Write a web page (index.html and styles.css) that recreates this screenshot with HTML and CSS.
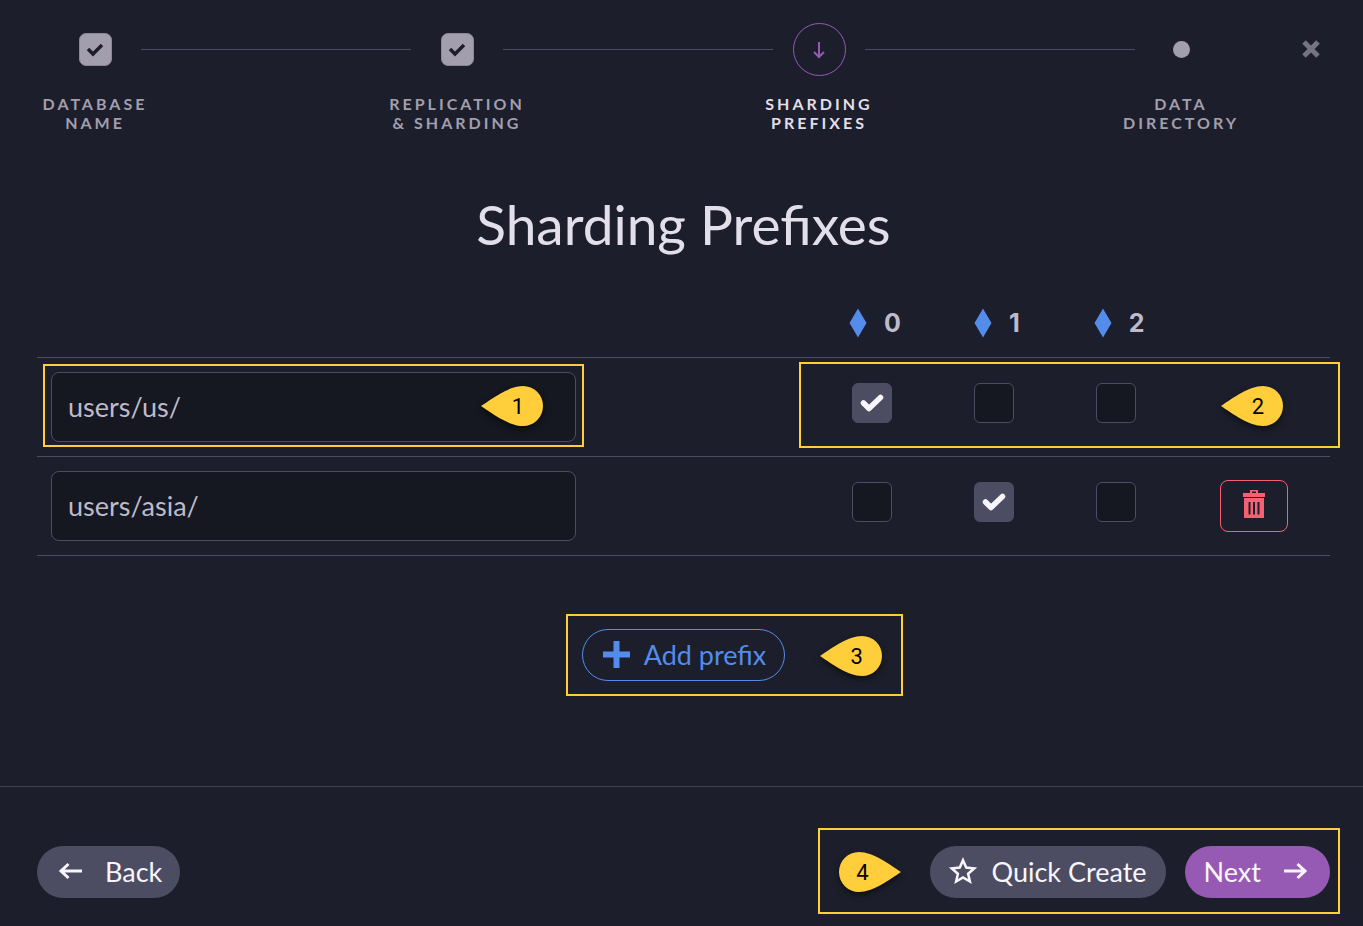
FILE: index.html
```html
<!DOCTYPE html>
<html lang="en">
<head>
<meta charset="utf-8">
<meta name="viewport" content="width=device-width, initial-scale=1">
<title>Sharding Prefixes</title>
<link rel="stylesheet" href="styles.css">
</head>
<body>
<svg class="sprite" aria-hidden="true">
  <symbol id="check" viewBox="0 0 24 18"><path d="M3.5 9 L9 14.5 L20.5 3.5" fill="none" stroke="currentColor" stroke-width="5.5" stroke-linecap="round" stroke-linejoin="round"/></symbol>
  <symbol id="check-sharp" viewBox="0 0 18 14"><path d="M2 6 L7 11 L16 2" fill="none" stroke="currentColor" stroke-width="3.5"/></symbol>
  <symbol id="arrow" viewBox="0 0 24 18"><path d="M0 9 H21 M13.5 2 L21 9 L13.5 16" fill="none" stroke="currentColor" stroke-width="3"/></symbol>
  <symbol id="diamond" viewBox="0 0 18 30"><path d="M9 0.5 L17.5 15 L9 29.5 L0.5 15Z" fill="currentColor"/></symbol>
  <symbol id="pin" viewBox="0 0 62 40"><path d="M0 20 C12 12 28 0 42 0 A20 20 0 0 1 42 40 C28 40 12 28 0 20Z" fill="currentColor"/></symbol>
</svg>

<header class="top">
  <ol class="steps">
    <li class="step">
      <span class="step-icon"><span class="step-done"><svg width="18" height="14"><use href="#check-sharp"/></svg></span></span>
      <span class="step-label">Database<br>name</span>
    </li>
    <li class="step-line"></li>
    <li class="step">
      <span class="step-icon"><span class="step-done"><svg width="18" height="14"><use href="#check-sharp"/></svg></span></span>
      <span class="step-label">Replication<br>&amp; sharding</span>
    </li>
    <li class="step-line"></li>
    <li class="step step-active" aria-current="step">
      <span class="step-icon"><span class="step-current"><svg width="14" height="18" viewBox="0 0 14 18"><path d="M7 1 V16 M2 11 L7 16 L12 11" fill="none" stroke="currentColor" stroke-width="2"/></svg></span></span>
      <span class="step-label">Sharding<br>prefixes</span>
    </li>
    <li class="step-line"></li>
    <li class="step">
      <span class="step-icon"><span class="step-dot"></span></span>
      <span class="step-label">Data<br>directory</span>
    </li>
  </ol>
  <button class="close" type="button" aria-label="Close"><svg width="20" height="20" viewBox="0 0 20 20"><path d="M3 3 L17 17 M17 3 L3 17" stroke="currentColor" stroke-width="5"/></svg></button>
</header>

<main class="content">
  <h1 class="title">Sharding Prefixes</h1>
  <table class="prefixes">
    <thead>
      <tr>
        <th class="col-prefix"></th>
        <th class="col-shard"><span class="shard"><svg width="18" height="30"><use href="#diamond"/></svg>0</span></th>
        <th class="col-shard"><span class="shard"><svg width="18" height="30"><use href="#diamond"/></svg>1</span></th>
        <th class="col-shard"><span class="shard"><svg width="18" height="30"><use href="#diamond"/></svg>2</span></th>
        <th class="col-action"></th>
      </tr>
    </thead>
    <tbody>
      <tr class="row-marked">
        <td>
          <div class="field">
            <input class="text" type="text" value="users/us/" aria-label="Prefix 1">
            <div class="callout callout-field"><span class="pin"><svg><use href="#pin"/></svg><b>1</b></span></div>
          </div>
        </td>
        <td class="cell-check"><label class="tick"><input type="checkbox" checked aria-label="users/us/ on shard 0"><svg width="24" height="18"><use href="#check"/></svg></label></td>
        <td class="cell-check"><label class="tick"><input type="checkbox" aria-label="users/us/ on shard 1"><svg width="24" height="18"><use href="#check"/></svg></label></td>
        <td class="cell-check"><label class="tick"><input type="checkbox" aria-label="users/us/ on shard 2"><svg width="24" height="18"><use href="#check"/></svg></label></td>
        <td><div class="callout callout-shards"><span class="pin"><svg><use href="#pin"/></svg><b>2</b></span></div></td>
      </tr>
      <tr>
        <td>
          <div class="field"><input class="text" type="text" value="users/asia/" aria-label="Prefix 2"></div>
        </td>
        <td class="cell-check"><label class="tick"><input type="checkbox" aria-label="users/asia/ on shard 0"><svg width="24" height="18"><use href="#check"/></svg></label></td>
        <td class="cell-check"><label class="tick"><input type="checkbox" checked aria-label="users/asia/ on shard 1"><svg width="24" height="18"><use href="#check"/></svg></label></td>
        <td class="cell-check"><label class="tick"><input type="checkbox" aria-label="users/asia/ on shard 2"><svg width="24" height="18"><use href="#check"/></svg></label></td>
        <td class="cell-action">
          <button class="delete" type="button" aria-label="Delete prefix"><svg width="22" height="28" viewBox="0 0 22 28"><path fill="currentColor" fill-rule="evenodd" d="M7 0H15V3H22V7H0V3H7ZM9 1.500V3H13V1.500ZM1 8H21V28H1ZM5.500 12V24.500H7.500V12ZM10 12V24.500H12V12ZM14.500 12V24.500H16.500V12Z"/></svg></button>
        </td>
      </tr>
    </tbody>
  </table>
  <div class="add">
    <button class="btn btn-outline" type="button"><svg width="27" height="27" viewBox="0 0 27 27"><path d="M13.500 0V27M0 13.500H27" stroke="currentColor" stroke-width="6"/></svg>Add prefix</button>
    <div class="callout callout-add"><span class="pin"><svg><use href="#pin"/></svg><b>3</b></span></div>
  </div>
</main>

<footer class="bottom">
  <button class="btn btn-back" type="button"><svg class="flip" width="24" height="18"><use href="#arrow"/></svg>Back</button>
  <div class="actions">
    <div class="callout callout-actions"><span class="pin pin-right"><svg class="flip"><use href="#pin"/></svg><b>4</b></span></div>
    <button class="btn btn-quick" type="button"><svg width="28" height="28" viewBox="0 0 28 28"><path d="M14 3.200 L17.200 10.600 L25.200 11.400 L19.100 16.700 L20.900 24.500 L14 20.400 L7.100 24.500 L8.900 16.700 L2.800 11.400 L10.800 10.600Z" fill="none" stroke="currentColor" stroke-width="2.500"/></svg>Quick Create</button>
    <button class="btn btn-next" type="button">Next<svg width="24" height="18"><use href="#arrow"/></svg></button>
  </div>
</footer>
</body>
</html>
```
FILE: styles.css
```css
* { box-sizing: border-box; }

body {
  margin: 0;
  min-height: 100vh;
  display: flex;
  flex-direction: column;
  background: #1c1e2b;
  color: #bfbaca;
  font-family: Lato, "Open Sans", sans-serif;
  font-size: 27px;
}

button, input { font: inherit; margin: 0; }
button { cursor: pointer; }
svg { display: block; flex: none; overflow: visible; }
.sprite { position: absolute; width: 0; height: 0; }
.flip { transform: scaleX(-1); }

/* Stepper */
.top {
  display: flex;
  align-items: flex-start;
  padding: 23px 37px 0 49px;
}
.steps {
  flex: 1;
  display: flex;
  margin: 0;
  padding: 0;
  list-style: none;
}
.step {
  width: 92px;
  display: flex;
  flex-direction: column;
  align-items: center;
  gap: 18px;
  color: #a29eae;
}
.step-line {
  flex: 1;
  height: 1px;
  margin-top: 26px;
  background: #4c4d62;
}
.step-icon {
  height: 53px;
  display: grid;
  place-items: center;
}
.step-done {
  width: 33px;
  height: 33px;
  display: grid;
  place-items: center;
  border: 1px solid #8b8799;
  border-radius: 7px;
  background: #a29eae;
  color: #1c1e2b;
}
.step-current {
  width: 53px;
  height: 53px;
  display: grid;
  place-items: center;
  border: 1px solid #965ab5;
  border-radius: 50%;
  color: #965ab5;
}
.step-dot {
  width: 17px;
  height: 17px;
  border-radius: 50%;
  background: #a29eae;
}
.step-label {
  font-size: 16px;
  font-weight: 700;
  line-height: 19px;
  letter-spacing: 3px;
  text-align: center;
  text-transform: uppercase;
  white-space: nowrap;
}
.step-active { color: #e2dfea; }
.close {
  height: 52px;
  margin-left: 69px;
  padding: 0 5px;
  border: 0;
  background: none;
  color: #777482;
}

/* Content */
.content {
  flex: 1;
  display: flex;
  flex-direction: column;
  padding: 0 33px 0 37px;
}
.title {
  margin: 60px 0 33px;
  color: #e2dfea;
  font-size: 55px;
  font-weight: 400;
  line-height: 64px;
  text-align: center;
}
.prefixes {
  width: 100%;
  border-spacing: 0;
  table-layout: fixed;
}
.prefixes th, .prefixes td {
  padding: 0;
  border-bottom: 1px solid #4c4d62;
}
.prefixes th { height: 69px; }
.prefixes td { height: 99px; }
.col-shard { width: 122px; }
.col-action { width: 153px; }
.shard {
  display: flex;
  justify-content: center;
  align-items: center;
  gap: 17px;
  padding-left: 6px;
  font-family: Inter, sans-serif;
  font-size: 25px;
  font-weight: 700;
}
.shard svg { color: #538cea; }

.row-marked { position: relative; }
.field {
  position: relative;
  width: 525px;
  margin: 0 14px;
}
.text {
  display: block;
  width: 100%;
  height: 70px;
  padding: 0 16px 2px;
  border: 1px solid #4c4d62;
  border-radius: 8px;
  background: #151721;
  color: #bfbaca;
}
.prefixes .cell-check { padding-bottom: 8px; }
.tick {
  position: relative;
  display: block;
  width: 40px;
  height: 40px;
  margin: 0 auto;
}
.tick input {
  appearance: none;
  display: block;
  width: 40px;
  height: 40px;
  border: 1px solid #4c4d62;
  border-radius: 6px;
  background: #151721;
}
.tick svg {
  position: absolute;
  inset: 0;
  margin: auto;
  color: #f8f5fc;
  visibility: hidden;
  pointer-events: none;
}
.tick input:checked { background: #4c4d62; }
.tick input:checked + svg { visibility: visible; }
.delete {
  width: 68px;
  height: 52px;
  display: grid;
  place-items: center;
  margin: 0 auto;
  padding: 0 0 4px;
  border: 1px solid #f75f72;
  border-radius: 8px;
  background: none;
  color: #f75f72;
}

/* Buttons */
.btn {
  height: 52px;
  display: flex;
  align-items: center;
  gap: 23px;
  padding: 0 18px 2px;
  border: 1px solid transparent;
  border-radius: 26px;
  background: #4c4d62;
  color: #f8f5fc;
}
.btn-outline {
  gap: 14px;
  padding: 0 18px 2px 20px;
  border-color: #538cea;
  background: none;
  color: #538cea;
}
.btn-back { padding: 0 17px 2px 20px; }
.btn-quick { gap: 15px; }
.btn-next { padding-right: 21px; background: #965ab5; }
.add {
  position: relative;
  align-self: center;
  margin: 73px 0;
}

/* Footer */
.bottom {
  display: flex;
  justify-content: space-between;
  padding: 59px 33px 28px 37px;
  border-top: 1px solid #3e3f4e;
}
.actions {
  position: relative;
  display: flex;
  gap: 19px;
}

/* Numbered callouts drawn over the form */
.callout {
  position: absolute;
  border: 2px solid #ffce3a;
  pointer-events: none;
}
.callout-field { inset: -8px -8px -5px; }
.callout-shards { top: 4px; right: -10px; bottom: 9px; width: 541px; }
.callout-add { top: -15px; bottom: -15px; left: -16px; width: 337px; }
.callout-actions { top: -18px; right: -10px; bottom: -16px; left: -112px; }
.pin {
  position: absolute;
  top: 20px;
  width: 62px;
  height: 40px;
  color: #ffce3a;
}
.pin svg {
  width: 62px;
  height: 40px;
  filter: drop-shadow(0 3px 3px rgba(0, 0, 0, 0.5));
}
.pin b {
  position: absolute;
  inset: 0 0 0 12px;
  color: #000;
  font: 400 22px/42px Roboto, sans-serif;
  text-align: center;
}
.pin-right b { inset: 0 14px 0 0; }
.callout-field .pin { right: 39px; }
.callout-shards .pin { top: 22px; right: 55px; }
.callout-add .pin { right: 19px; }
.callout-actions .pin { top: 22px; left: 19px; }
```
